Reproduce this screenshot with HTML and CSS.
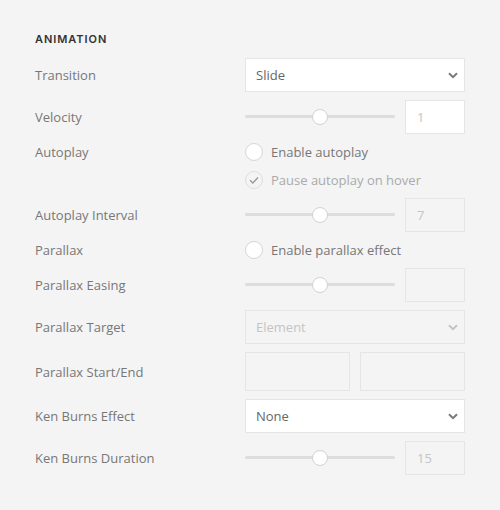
FILE: index.html
```html
<!DOCTYPE html>
<html>
<head>
<meta charset="utf-8">
<link rel="stylesheet" href="styles.css">
</head>
<body>
<div class="panel">
  <h3 class="heading">ANIMATION</h3>
  <div class="form">
    <div class="label">Transition</div>
    <div class="select"><span>Slide</span><svg class="chev" viewBox="0 0 10 7" width="10" height="7"><path d="M1 1.2 L5 5.2 L9 1.2" fill="none" stroke="#7a7a7a" stroke-width="2"/></svg></div>

    <div class="label">Velocity</div>
    <div class="range-row"><div class="slider"><div class="track"></div><div class="thumb"></div></div><div class="num white">1</div></div>

    <div class="label radio-label">Autoplay</div>
    <div class="check-row"><span class="radio"></span><span class="ctext">Enable autoplay</span></div>

    <div class="label"></div>
    <div class="check-row disabled"><span class="radio checked"><svg viewBox="0 0 18 18" width="18" height="18"><path d="M5 9.2 L7.8 12 L13 6.4" fill="none" stroke="#9a9a9a" stroke-width="1.4"/></svg></span><span class="ctext">Pause autoplay on hover</span></div>

    <div class="label">Autoplay Interval</div>
    <div class="range-row"><div class="slider"><div class="track"></div><div class="thumb"></div></div><div class="num">7</div></div>

    <div class="label radio-label">Parallax</div>
    <div class="check-row"><span class="radio"></span><span class="ctext">Enable parallax effect</span></div>

    <div class="label">Parallax Easing</div>
    <div class="range-row"><div class="slider"><div class="track"></div><div class="thumb"></div></div><div class="num"></div></div>

    <div class="label">Parallax Target</div>
    <div class="select disabled"><span>Element</span><svg class="chev" viewBox="0 0 10 7" width="10" height="7"><path d="M1 1.2 L5 5.2 L9 1.2" fill="none" stroke="#c4c4c4" stroke-width="2"/></svg></div>

    <div class="label">Parallax Start/End</div>
    <div class="pair"><div class="box"></div><div class="box"></div></div>

    <div class="label">Ken Burns Effect</div>
    <div class="select"><span>None</span><svg class="chev" viewBox="0 0 10 7" width="10" height="7"><path d="M1 1.2 L5 5.2 L9 1.2" fill="none" stroke="#7a7a7a" stroke-width="2"/></svg></div>

    <div class="label">Ken Burns Duration</div>
    <div class="range-row"><div class="slider"><div class="track"></div><div class="thumb"></div></div><div class="num">15</div></div>
  </div>
</div>
</body>
</html>
```
FILE: styles.css
```css
html, body {
  margin: 0;
  padding: 0;
  background: #f4f4f4;
}
body {
  width: 500px;
  height: 510px;
  font-family: "Open Sans", "Liberation Sans", sans-serif;
  font-size: 13px;
  color: #777;
}
.panel {
  padding: 33px 0 0 35px;
}
.heading {
  margin: 0;
  font-family: Inter, "Open Sans", sans-serif;
  font-weight: 600;
  font-size: 11px;
  line-height: 13px;
  letter-spacing: 0.95px;
  color: #333;
  height: 13px;
}
.form {
  margin-top: 12px;
  display: grid;
  grid-template-columns: 210px 220px;
  row-gap: 8px;
}
.label {
  display: flex;
  align-items: center;
  color: #777;
  line-height: 18px;
}
.select {
  box-sizing: border-box;
  height: 34px;
  background: #fff;
  border: 1px solid #e5e5e5;
  display: flex;
  align-items: center;
  justify-content: space-between;
  padding: 0 6px 0 10px;
  color: #666;
}
.select.disabled {
  background: transparent;
  color: #c4c4c4;
}
.chev {
  display: block;
  margin-top: 1px;
}
.range-row {
  display: flex;
  align-items: center;
  height: 34px;
  gap: 10px;
}
.slider {
  position: relative;
  width: 150px;
  height: 34px;
}
.track {
  position: absolute;
  left: 0;
  right: 0;
  top: 15px;
  height: 3px;
  border-radius: 2px;
  background: #ddd;
}
.thumb {
  position: absolute;
  left: 67px;
  top: 9px;
  width: 14px;
  height: 14px;
  border-radius: 50%;
  background: #fff;
  border: 1px solid #d2d2d2;
}
.num {
  box-sizing: border-box;
  width: 60px;
  height: 34px;
  border: 1px solid #e5e5e5;
  padding-left: 11px;
  display: flex;
  align-items: center;
  color: #c4c4c4;
}
.num.white {
  background: #fff;
}
.check-row {
  display: flex;
  align-items: flex-start;
  height: 20px;
}
.radio {
  box-sizing: border-box;
  width: 18px;
  height: 18px;
  margin-top: 1px;
  border-radius: 50%;
  border: 1px solid #d6d6d6;
  background: #fff;
  position: relative;
  flex: none;
}
.radio.checked {
  background: #f4f4f4;
  border-color: #dedede;
}
.radio svg {
  position: absolute;
  left: -1px;
  top: -1px;
}
.ctext {
  margin-left: 8px;
  line-height: 20px;
  color: #777;
}
.disabled .ctext {
  color: #aaa;
}
.radio-label {
  height: 20px;
}
.pair {
  display: flex;
  gap: 10px;
  height: 39px;
}
.box {
  flex: 1;
  box-sizing: border-box;
  border: 1px solid #e5e5e5;
}
```
